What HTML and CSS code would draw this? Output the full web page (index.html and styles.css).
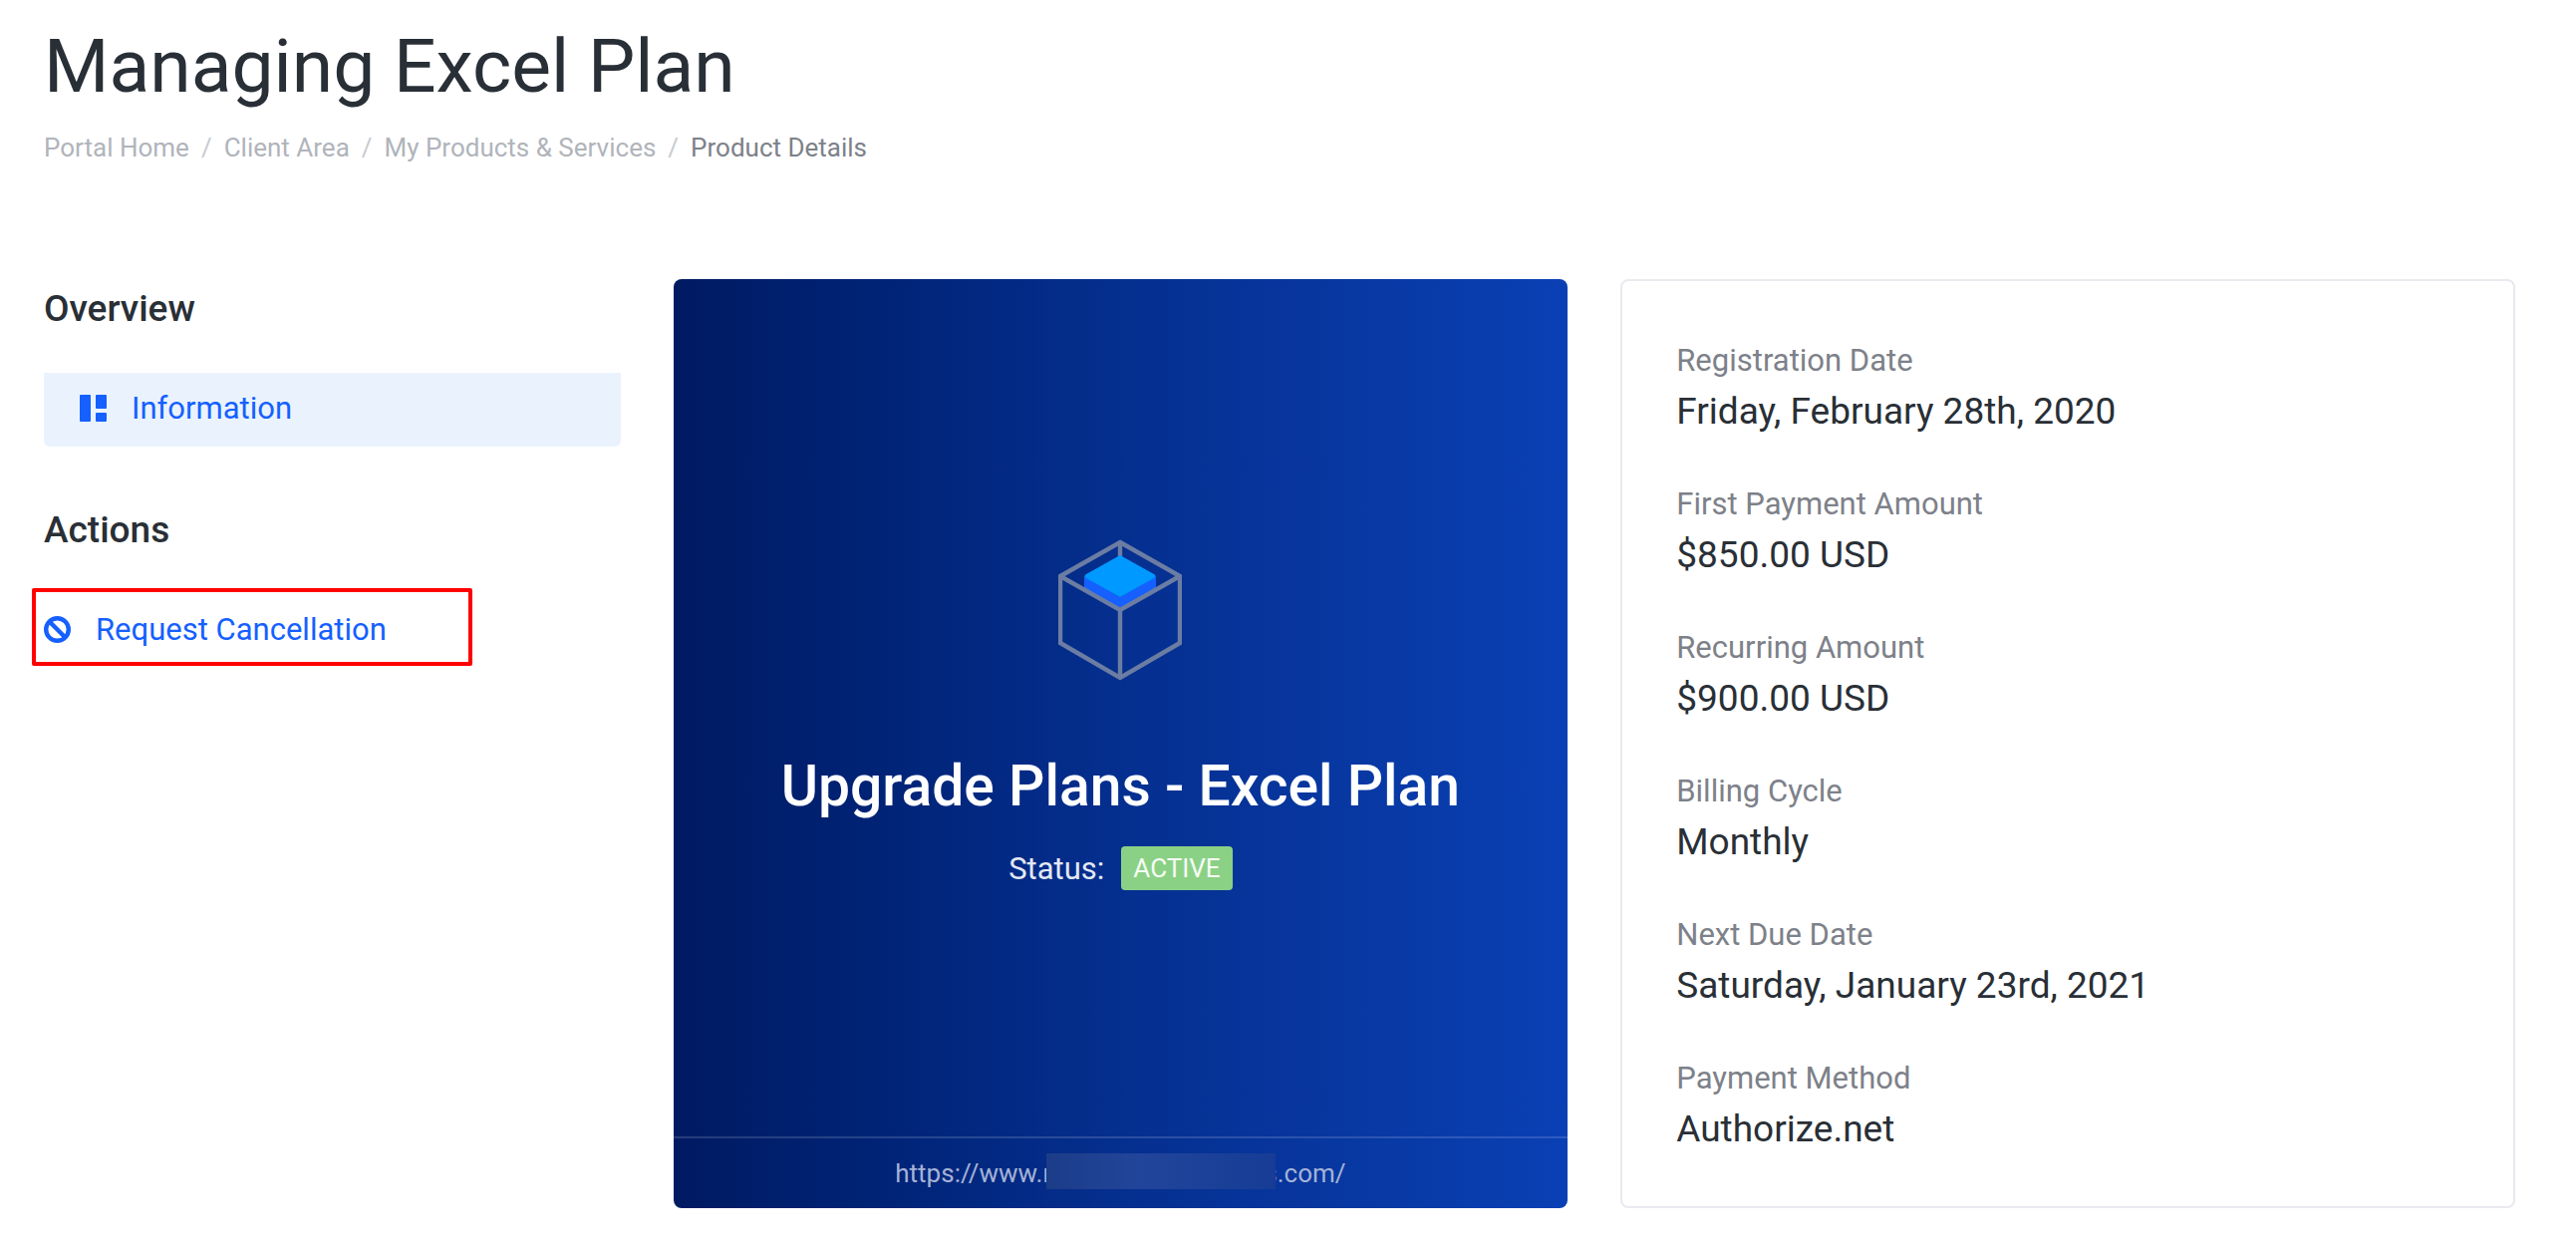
FILE: index.html
```
<!DOCTYPE html>
<html lang="en">

<head>
    <meta charset="UTF-8">
    <meta name="viewport" content="width=device-width, initial-scale=1.0">
    <title>Managing Excel Plan</title>
    <link rel="stylesheet" href="styles.css">
</head>

<body>
    <header class="page-header">
        <h1>Managing Excel Plan</h1>
        <nav aria-label="Breadcrumb">
            <ol class="breadcrumb">
                <li><a href="#">Portal Home</a></li>
                <li><a href="#">Client Area</a></li>
                <li><a href="#">My Products &amp; Services</a></li>
                <li class="active">Product Details</li>
            </ol>
        </nav>
    </header>

    <main class="layout">
        <aside class="sidebar">
            <section>
                <h2>Overview</h2>
                <a href="#" class="menu-item active">
                    <svg class="icon" viewBox="0 0 27 27" aria-hidden="true">
                        <rect x="0" y="0" width="11" height="27" rx="1" />
                        <rect x="16" y="0" width="11" height="14" rx="1" />
                        <rect x="16" y="18" width="11" height="9" rx="1" />
                    </svg>
                    Information
                </a>
            </section>
            <section>
                <h2>Actions</h2>
                <a href="#" class="menu-item highlighted">
                    <svg class="icon" viewBox="0 0 27 27" aria-hidden="true">
                        <circle cx="13.5" cy="13.5" r="11.3" fill="none" stroke="currentColor" stroke-width="4.4" />
                        <path d="M6 6L21 21" stroke="currentColor" stroke-width="4.4" />
                    </svg>
                    Request Cancellation
                </a>
            </section>
        </aside>

        <section class="product">
            <div class="product-body">
                <svg class="cube" viewBox="0 0 124 142" aria-hidden="true">
                    <g fill="none" stroke="#6c7da3" stroke-width="4.4">
                        <path d="M62 2V30" />
                        <path d="M62 3L122 37V104L62 139L2 104V37Z" />
                    </g>
                    <path d="M26 37V49L62 70L98 49V37L62 58Z" fill="#1560ff" />
                    <path d="M62 16L96 35Q99 37 96 39L62 58L28 39Q25 37 28 35Z" fill="#0099ff" />
                    <g fill="none" stroke="#6c7da3" stroke-width="4.4">
                        <path d="M2 37L62 71L122 37M62 71V139" />
                    </g>
                </svg>
                <h2>Upgrade Plans - Excel Plan</h2>
                <p class="status">Status: <span class="badge">ACTIVE</span></p>
            </div>
            <footer class="product-footer">
                <a href="#">https://www.r<span class="redacted"></span>s.com/</a>
            </footer>
        </section>

        <dl class="details">
            <div>
                <dt>Registration Date</dt>
                <dd>Friday, February 28th, 2020</dd>
            </div>
            <div>
                <dt>First Payment Amount</dt>
                <dd>$850.00 USD</dd>
            </div>
            <div>
                <dt>Recurring Amount</dt>
                <dd>$900.00 USD</dd>
            </div>
            <div>
                <dt>Billing Cycle</dt>
                <dd>Monthly</dd>
            </div>
            <div>
                <dt>Next Due Date</dt>
                <dd>Saturday, January 23rd, 2021</dd>
            </div>
            <div>
                <dt>Payment Method</dt>
                <dd>Authorize.net</dd>
            </div>
        </dl>
    </main>
</body>

</html>
```

FILE: styles.css
```
*, *::before, *::after {
    box-sizing: border-box;
}

body {
    margin: 0;
    padding: 20px 61px 44px 44px;
    font-family: Roboto, "Liberation Sans", sans-serif;
    font-size: 31px;
    color: #292f36;
    background: #fff;
}

h1, h2, p, ol, dl, dd {
    margin: 0;
    padding: 0;
}

a {
    color: #1560ff;
    text-decoration: none;
}

h1 {
    font-size: 75px;
    font-weight: 400;
    line-height: 92px;
}

h2 {
    font-size: 37px;
    font-weight: 500;
    line-height: 60px;
}

.breadcrumb {
    display: flex;
    margin-top: 16px;
    list-style: none;
    font-size: 26px;
    line-height: 40px;
}

.breadcrumb a {
    color: #b0b4bb;
}

.breadcrumb .active {
    color: #7d8189;
}

.breadcrumb li + li::before {
    content: "/";
    padding: 0 12px;
    color: #c8cbd0;
}

.layout {
    display: grid;
    grid-template-columns: 29fr 45fr 45fr;
    gap: 53px;
    margin-top: 112px;
}

.sidebar {
    display: flex;
    flex-direction: column;
    gap: 54px;
}

.sidebar h2 {
    margin-bottom: 34px;
}

.menu-item {
    position: relative;
    display: flex;
    align-items: center;
    gap: 25px;
    height: 74px;
    padding-bottom: 4px;
}

.menu-item.active {
    padding: 0 36px 4px;
    background: #eaf3fd;
    border-radius: 0 0 6px 6px;
}

/* red frame around the cancellation link */
.highlighted::after {
    content: "";
    position: absolute;
    top: -6px;
    left: -12px;
    width: 442px;
    height: 78px;
    border: 4px solid #f00;
    border-radius: 2px;
}

.icon {
    width: 27px;
    height: 27px;
    fill: currentColor;
}

.product {
    display: flex;
    flex-direction: column;
    min-height: 932px;
    overflow: hidden;
    color: #fff;
    background: linear-gradient(90deg, #001a62, #002478 25%, #052f8f 50%, #0a40b4);
    border-radius: 8px;
}

.product-body {
    flex: 1;
    display: flex;
    flex-direction: column;
    align-items: center;
    justify-content: center;
    padding-top: 14px;
}

.cube {
    width: 124px;
    height: 142px;
}

.product h2 {
    margin-top: 66px;
    font-size: 57px;
    line-height: 80px;
}

.status {
    display: flex;
    align-items: center;
    gap: 17px;
    margin-top: 20px;
    color: #e3e8f3;
}

.badge {
    padding: 0 12px;
    font-size: 26px;
    line-height: 44px;
    color: #f6fcf5;
    background: #8bd185;
    border-radius: 4px;
}

.product-footer {
    border-top: 2px solid rgba(255, 255, 255, 0.15);
    font-size: 26px;
    line-height: 70px;
    text-align: center;
}

.product-footer a {
    color: #a5b2d6;
}

.redacted {
    position: relative;
    display: inline-block;
    width: 230px;
    height: 36px;
    margin: 0 -12px 8px -5px;
    vertical-align: middle;
    background: linear-gradient(90deg, #1c3c88, #21459a 40%, #163c96);
}

.details {
    display: flex;
    flex-direction: column;
    gap: 42px;
    padding: 56px 54px 50px;
    border: 2px solid #e8eaef;
    border-radius: 8px;
}

.details dt {
    line-height: 48px;
    color: #7d8189;
}

.details dd {
    font-size: 37px;
    line-height: 54px;
}
```
